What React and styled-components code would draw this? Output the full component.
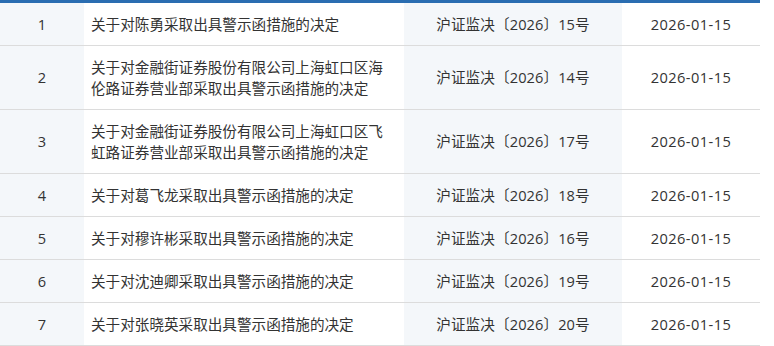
import React from 'react'
import styled, { createGlobalStyle } from 'styled-components'

const GlobalStyle = createGlobalStyle`
  body {
    margin: 0;
    background: #fff;
    font-family: "Open Sans", "Noto Sans CJK SC", sans-serif;
  }
`

const rows = [
  { no: 1, title: '关于对陈勇采取出具警示函措施的决定', doc: '沪证监决〔2026〕15号', date: '2026-01-15' },
  { no: 2, title: '关于对金融街证券股份有限公司上海虹口区海伦路证券营业部采取出具警示函措施的决定', doc: '沪证监决〔2026〕14号', date: '2026-01-15' },
  { no: 3, title: '关于对金融街证券股份有限公司上海虹口区飞虹路证券营业部采取出具警示函措施的决定', doc: '沪证监决〔2026〕17号', date: '2026-01-15' },
  { no: 4, title: '关于对葛飞龙采取出具警示函措施的决定', doc: '沪证监决〔2026〕18号', date: '2026-01-15' },
  { no: 5, title: '关于对穆许彬采取出具警示函措施的决定', doc: '沪证监决〔2026〕16号', date: '2026-01-15' },
  { no: 6, title: '关于对沈迪卿采取出具警示函措施的决定', doc: '沪证监决〔2026〕19号', date: '2026-01-15' },
  { no: 7, title: '关于对张晓英采取出具警示函措施的决定', doc: '沪证监决〔2026〕20号', date: '2026-01-15' },
]

function App() {
  return (
    <>
      <GlobalStyle />
      <List>
        {rows.map((r) => (
          <Row key={r.no}>
            <NoCell>{r.no}</NoCell>
            <TitleCell>{r.title}</TitleCell>
            <DocCell>{r.doc}</DocCell>
            <DateCell>{r.date}</DateCell>
          </Row>
        ))}
      </List>
    </>
  )
}

export default App

const List = styled.div`
  width: 760px;
  border-top: 3px solid #2a6db1;
`

const Row = styled.div`
  display: grid;
  grid-template-columns: 84px 320px 218px 138px;
  border-bottom: 1px solid #dcdcdc;
`

const Cell = styled.div`
  display: flex;
  align-items: center;
  padding: 10.5px 7px;
  font-size: 14.6px;
  line-height: 21px;
  color: #333;
  background: #fff;
`

const NoCell = styled(Cell)`
  justify-content: center;
  background: #f4f7fa;
`

const TitleCell = styled(Cell)``

const DocCell = styled(Cell)`
  justify-content: center;
  background: #f4f7fa;
  letter-spacing: 0.1px;
`

const DateCell = styled(Cell)`
  justify-content: center;
  letter-spacing: 0.45px;
`
